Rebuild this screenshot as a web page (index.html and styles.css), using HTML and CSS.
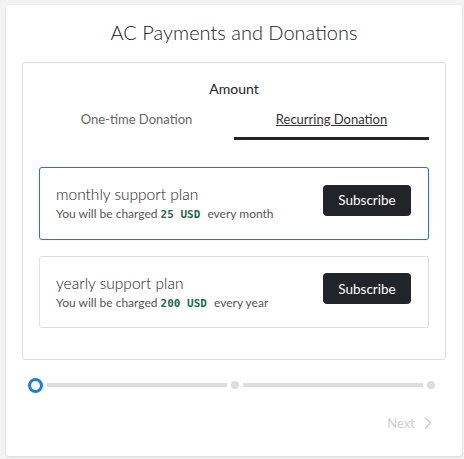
FILE: index.html
```html
<!DOCTYPE html>
<html lang="en">
<head>
  <meta charset="UTF-8" />
  <title>AC Payments and Donations</title>
  <link rel="stylesheet" href="styles.css">
</head>
<body>
  <div class="card">
    <h1 class="title">AC Payments and Donations</h1>

    <div class="panel">
      <div class="amount">Amount</div>
      <div class="tabs">
        <div class="tab">One-time Donation</div>
        <div class="tab active"><span>Recurring Donation</span></div>
      </div>

      <div class="plan selected">
        <div class="plan-info">
          <div class="plan-name">monthly support plan</div>
          <div class="plan-desc">You will be charged <code>25 USD</code> every month</div>
        </div>
        <button class="subscribe">Subscribe</button>
      </div>

      <div class="plan">
        <div class="plan-info">
          <div class="plan-name">yearly support plan</div>
          <div class="plan-desc">You will be charged <code>200 USD</code> every year</div>
        </div>
        <button class="subscribe">Subscribe</button>
      </div>
    </div>

    <!-- steps -->
    <div class="stepper">
      <div class="step current"></div>
      <div class="step-line"></div>
      <div class="step"></div>
      <div class="step-line"></div>
      <div class="step"></div>
    </div>

    <div class="footer">
      <button class="next" disabled>Next
        <svg width="10" height="14" viewBox="0 0 10 14"><path d="M2 1.5 L7.5 7 L2 12.5" fill="none" stroke="currentColor" stroke-width="1.5"/></svg>
      </button>
    </div>
  </div>
</body>
</html>
```

FILE: styles.css
```css
body {
  margin: 0;
  background-color: #f3f3f3;
  font-family: 'Lato', 'Open Sans', sans-serif;
  color: #212529;
}
.card {
  margin: 5px 2px 3px 6px;
  height: 451px;
  box-sizing: border-box;
  padding: 0 16px;
  background-color: white;
  border-radius: 3px;
  box-shadow: 0 1px 3px rgba(0, 0, 0, 0.12);
}
.title {
  margin: 0;
  padding-top: 15px;
  height: 42px;
  font-size: 20px;
  font-weight: 300;
  text-align: center;
  color: #222;
}
.panel {
  border: 1px solid #ddd;
  border-radius: 3px;
  padding: 15px 16px 32px 16px;
  height: 298px;
  box-sizing: border-box;
}
.amount {
  font-size: 14px;
  text-align: center;
  line-height: 20px;
  padding-top: 1px;
}
.tabs {
  display: flex;
  margin-top: 10px;
  margin-bottom: 27px;
}
.tab {
  flex: 1;
  text-align: center;
  font-size: 13px;
  color: #666;
  line-height: 20px;
  padding-bottom: 8px;
  border-bottom: 3px solid transparent;
}
.tab.active {
  color: #333;
  border-bottom-color: #212529;
}
.tab.active span {
  text-decoration: underline;
}
.plan {
  display: flex;
  align-items: center;
  justify-content: space-between;
  border: 1px solid #ddd;
  border-radius: 3px;
  height: 72px;
  box-sizing: border-box;
  padding: 0 17px 0 16px;
  margin-bottom: 16px;
}
.plan.selected {
  border-color: #2b79ad;
  height: 73px;
  box-shadow: 0 0 1px rgba(43, 121, 173, 0.5);
}
.plan-name {
  font-size: 15.5px;
  font-weight: 300;
  color: #1a1a1a;
  line-height: 21px;
}
.plan-desc {
  font-size: 12px;
  color: #555;
  line-height: 17px;
}
.plan-desc code {
  font-family: 'DejaVu Sans Mono', monospace;
  font-weight: bold;
  font-size: 11px;
  color: #1f6a4b;
  margin-right: 4px;
}
.subscribe {
  background-color: #212529;
  color: white;
  border: none;
  border-radius: 4px;
  width: 88px;
  height: 31px;
  margin-bottom: 7px;
  font-family: inherit;
  font-size: 13.5px;
  cursor: pointer;
}
.stepper {
  display: flex;
  align-items: center;
  height: 18px;
  margin-top: 16px;
  padding-left: 6px;
  padding-right: 11px;
}
.step {
  width: 8px;
  height: 8px;
  border-radius: 50%;
  background-color: #ddd;
  flex-shrink: 0;
}
.step.current {
  width: 9px;
  height: 9px;
  background-color: white;
  border: 3px solid #1d7ddc;
}
.step-line {
  flex: 1;
  height: 4px;
  background-color: #ddd;
  margin: 0 4px;
}
.footer {
  display: flex;
  justify-content: flex-end;
  margin-top: 21px;
}
.next {
  display: flex;
  align-items: center;
  gap: 8px;
  background: none;
  border: none;
  font-family: inherit;
  font-size: 13px;
  color: #cfcfcf;
  padding: 0 13px 0 0;
}
```
